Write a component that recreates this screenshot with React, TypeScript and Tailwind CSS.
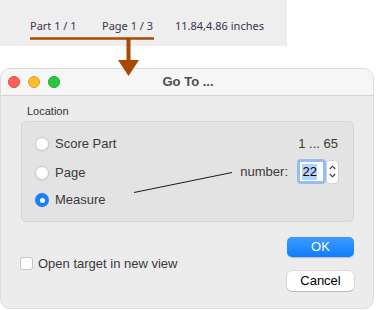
export default function App() {
  return (
    <div className="relative w-[376px] h-[310px] bg-white overflow-hidden font-['Liberation_Sans',sans-serif]">
      {/* status strip */}
      <div className="w-[287px] h-[46px] bg-[#eeeeee] flex items-center pl-[30px] pt-[6px] text-[11px] text-[#3a3350] font-['Noto_Sans',sans-serif]">
        <span className="w-[72px]">Part 1 / 1</span>
        <span className="w-[73px]">Page 1 / 3</span>
        <span>11.84,4.86 inches</span>
      </div>

      {/* callout arrow */}
      <svg className="absolute left-0 top-0 z-10" width="376" height="80">
        <line x1="30" y1="38.5" x2="154" y2="38.5" stroke="#aa4700" strokeWidth="2.5" />
        <line x1="128.5" y1="38" x2="128.5" y2="62" stroke="#aa4700" strokeWidth="4" />
        <polygon points="118,60 139,60 128.5,76" fill="#aa4700" />
      </svg>

      {/* dialog */}
      <div className="mt-[22px] w-[374px] h-[241px] rounded-[10px] overflow-hidden bg-[#ececec] border border-[#dcdcdc] flex flex-col">
        {/* title bar */}
        <div className="relative h-[27px] bg-[#f6f6f6] border-b border-[#d4d4d4] flex items-center shrink-0">
          <div className="flex items-center gap-[8px] ml-[7px]">
            <div className="w-[12px] h-[12px] rounded-full bg-[#fe5f57] border border-[#e2463f]" />
            <div className="w-[12px] h-[12px] rounded-full bg-[#febc2e] border border-[#e1a116]" />
            <div className="w-[12px] h-[12px] rounded-full bg-[#28c840] border border-[#1aab29]" />
          </div>
          <div className="absolute inset-0 flex items-center justify-center pl-[2px] text-[13px] font-bold text-[#4d4d4d]">
            Go To ...
          </div>
        </div>

        {/* body */}
        <div className="flex-1 pl-[20px] pr-[19px] pt-[9px]">
          <div className="text-[11px] text-[#333] pl-[6px] leading-[13px]">Location</div>
          <div className="relative mt-[3px] h-[101px] rounded-[5px] bg-[#e3e3e3] border border-[#d6d6d6] flex justify-between pl-[13px] pr-[15px] pt-[13px] text-[13px] text-[#3a3a3a]">
            <div className="flex flex-col">
              <label className="flex items-center gap-[6px] h-[18px]">
                <span className="w-[14px] h-[14px] rounded-full bg-white border border-[#c9c9c9] shadow-[0_0.5px_1px_rgba(0,0,0,0.1)]" />
                Score Part
              </label>
              <label className="flex items-center gap-[6px] h-[18px] mt-[11px]">
                <span className="w-[14px] h-[14px] rounded-full bg-white border border-[#c9c9c9] shadow-[0_0.5px_1px_rgba(0,0,0,0.1)]" />
                Page
              </label>
              <label className="flex items-center gap-[6px] h-[18px] mt-[9px]">
                <span className="w-[14px] h-[14px] rounded-full bg-[#1a7ffb] flex items-center justify-center">
                  <span className="w-[5px] h-[5px] rounded-full bg-white" />
                </span>
                Measure
              </label>
            </div>
            <div className="flex flex-col items-end">
              <div className="h-[18px] flex items-center">1 ... 65</div>
              <div className="flex items-center mt-[6px]">
                <span className="mr-[9px]">number:</span>
                <div className="w-[29px] h-[25px] rounded-[4px] bg-[#93bdf3] p-[3px]">
                  <div className="w-full h-full bg-white flex items-center pl-[2px]">
                    <span className="bg-[#b3d4fd] text-black text-[13px] leading-[16px] px-[0.5px]">22</span>
                  </div>
                </div>
                <div className="ml-[1px] w-[11px] h-[22px] rounded-[3px] bg-white shadow-[0_0_0_0.5px_rgba(0,0,0,0.15)] flex flex-col items-center justify-center gap-[3px]">
                  <svg width="7" height="5" viewBox="0 0 7 5">
                    <path d="M0.8 4 L3.5 1.2 L6.2 4" fill="none" stroke="#333" strokeWidth="1.1" />
                  </svg>
                  <svg width="7" height="5" viewBox="0 0 7 5">
                    <path d="M0.8 1 L3.5 3.8 L6.2 1" fill="none" stroke="#333" strokeWidth="1.1" />
                  </svg>
                </div>
              </div>
            </div>
            {/* annotation line */}
            <svg className="absolute left-0 top-0 pointer-events-none" width="334" height="101">
              <line x1="112" y1="70.5" x2="210" y2="50.5" stroke="#1a1a1a" strokeWidth="1" />
            </svg>
          </div>

          <div className="flex justify-between items-start mt-[15px]">
            <label className="flex items-center gap-[5px] mt-[17px] -ml-[1px] text-[13px] text-[#3a3a3a]">
              <span className="w-[13px] h-[13px] rounded-[3px] bg-white border border-[#c6c6c6]" />
              Open target in new view
            </label>
            <div className="flex flex-col gap-[14px]">
              <button className="w-[67px] h-[20px] rounded-[5px] bg-gradient-to-b from-[#3a9aff] to-[#0b7dff] text-white text-[13px] leading-[20px] shadow-[0_0.5px_1px_rgba(0,0,0,0.2)]">
                OK
              </button>
              <button className="w-[67px] h-[20px] rounded-[5px] bg-white text-black text-[13px] leading-[20px] shadow-[0_0_0_0.5px_rgba(0,0,0,0.15),0_1px_1px_rgba(0,0,0,0.15)]">
                Cancel
              </button>
            </div>
          </div>
        </div>
      </div>
    </div>
  );
}
